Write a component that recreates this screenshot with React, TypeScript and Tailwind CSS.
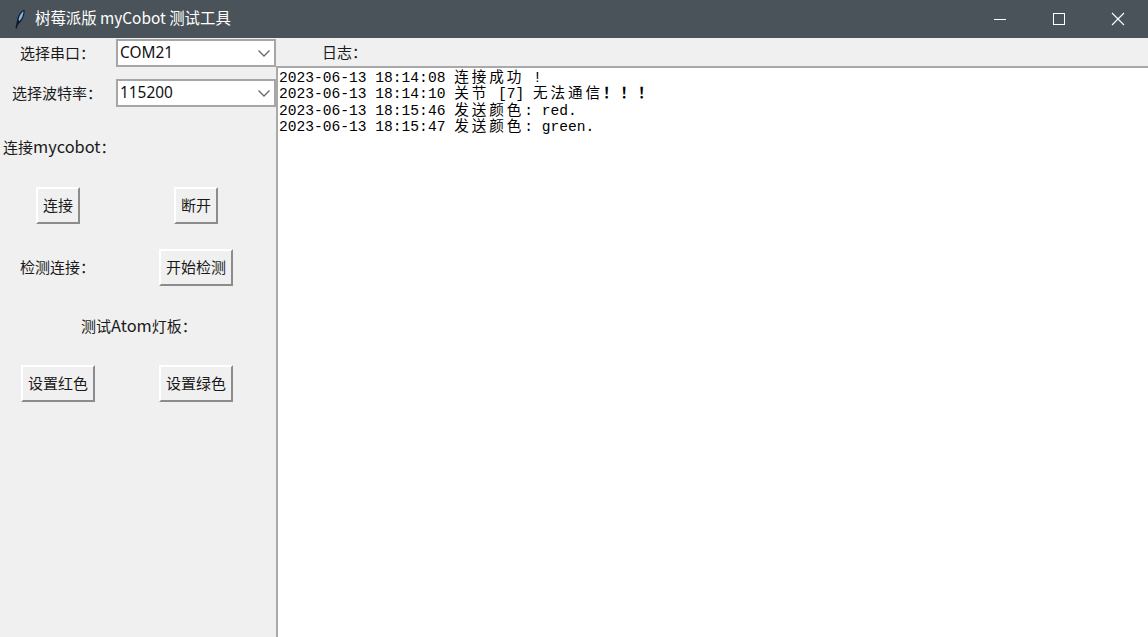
import React from 'react';

const cjk = '[font-family:"Noto_Sans_CJK_SC","Liberation_Sans",sans-serif]';

// Raised Tk-style button
const TkButton = ({ label, className }: { label: string; className: string }) => (
  <button
    className={`h-[37px] flex items-center justify-center pb-[2px] bg-[#f0f0f0] text-[15px] leading-none text-[#1a1a1a] border-t-2 border-l-2 border-b-2 border-r-2 border-t-white border-l-white border-b-[#8c8c8c] border-r-[#8c8c8c] ${className}`}
  >
    {label}
  </button>
);

const Combo = ({ value }: { value: string }) => (
  <div className="w-[160px] h-[28px] flex items-center justify-between bg-white border-2 border-[#a6a6a6] pl-[2px] pr-[3px]">
    <span className='font-["Noto_Sans"] text-[15.4px] leading-none pb-px text-[#111]'>{value}</span>
    <svg width="14" height="14" viewBox="0 0 14 14" fill="none" stroke="#6b6b6b" strokeWidth="1.4">
      <path d="M1.5 4.5 L7 10 L12.5 4.5" />
    </svg>
  </div>
);

// Chinese runs in the log sit on the double-width grid of the mono font
const Han = ({ children, bold }: { children: string; bold?: boolean }) => (
  <span className={`inline-block h-[16px] leading-[16px] font-["Noto_Sans_CJK_SC"] text-[14.6px] tracking-[2.9px] ${bold ? 'font-bold' : ''}`}>
    {children}
  </span>
);

const LogLine = ({ children }: { children: React.ReactNode }) => (
  <div className="h-[16.33px] leading-[16.33px] whitespace-pre">{children}</div>
);

export default function App() {
  return (
    <div className={`w-[1148px] h-[637px] flex flex-col overflow-hidden bg-[#f0f0f0] ${cjk}`}>
      {/* title bar */}
      <div className="h-[38px] shrink-0 flex items-center bg-[#4a5359] text-white">
        <svg className="ml-[14px]" width="12" height="22" viewBox="0 0 12 22">
          <path d="M1.5 20 C2 17 2.5 15 3 13 C3.5 8 6.5 3 10.5 1.5 C11 6 9 12 5.5 15 C4.5 16 4 17 3.5 18 L2.5 21 Z" fill="#0d1b2a" />
          <path d="M4.5 12 C5 8 7.5 4.5 9.5 3 C9.5 6.5 8 10.5 5.5 13 Z" fill="#7fb2e5" />
        </svg>
        <span className="ml-[9px] pb-[2px] text-[15.4px] leading-none whitespace-pre">树莓派版 myCobot 测试工具</span>
        <div className="ml-auto flex items-center h-full">
          <div className="w-[58px] h-full flex items-center justify-center">
            <div className="w-[12px] h-px bg-white" />
          </div>
          <div className="w-[59px] h-full flex items-center justify-center">
            <div className="w-[12px] h-[12px] border border-white" />
          </div>
          <div className="w-[60px] h-full flex items-center justify-center">
            <svg width="14" height="14" viewBox="0 0 14 14" stroke="#fff" strokeWidth="1.1">
              <path d="M1 1 L13 13 M13 1 L1 13" />
            </svg>
          </div>
        </div>
      </div>

      <div className="flex-1 flex min-h-0">
        {/* left panel */}
        <div className="w-[276px] shrink-0 flex flex-col text-[15px] leading-none text-[#1a1a1a]">
          <div className="flex items-center mt-px">
            <span className="w-[116px] pl-[20px] pb-[2px] whitespace-pre">选择串口：</span>
            <Combo value="COM21" />
          </div>
          <div className="flex items-center mt-[12px]">
            <span className="w-[116px] pl-[12px] pb-[2px] whitespace-pre">选择波特率：</span>
            <Combo value="115200" />
          </div>
          <div className="mt-[32px] pl-[3px] h-[14px] flex items-center whitespace-pre">
            连接<span className="text-[16.4px]">mycobot</span>：
          </div>
          <div className="mt-[34px] flex">
            <TkButton label="连接" className="w-[44px] ml-[36px]" />
            <TkButton label="断开" className="w-[44px] ml-[94px]" />
          </div>
          <div className="mt-[25px] flex items-center">
            <span className="w-[159px] pl-[20px] pb-[3px] whitespace-pre">检测连接：</span>
            <TkButton label="开始检测" className="w-[74px]" />
          </div>
          <div className="mt-[32px] pl-[81px] h-[14px] flex items-center whitespace-pre">
            测试<span className="text-[16.4px]">Atom</span>灯板：
          </div>
          <div className="mt-[33px] flex">
            <TkButton label="设置红色" className="w-[74px] ml-[21px]" />
            <TkButton label="设置绿色" className="w-[74px] ml-[64px]" />
          </div>
        </div>

        {/* log panel */}
        <div className="flex-1 min-w-0 flex flex-col">
          <div className="h-[28px] shrink-0 flex items-center pl-[46px] pb-[2px] text-[15px] leading-none text-[#1a1a1a] whitespace-pre">日志：</div>
          <div className='flex-1 bg-white border-t-2 border-l-2 border-[#a9a9a9] pl-px font-["Liberation_Mono"] text-[14.6px] text-black'>
            <LogLine>2023-06-13 18:14:08 <Han>连接成功</Han> !</LogLine>
            <LogLine>2023-06-13 18:14:10 <Han>关节</Han> [7] <Han>无法通信</Han><Han bold>！！！</Han></LogLine>
            <LogLine>2023-06-13 18:15:46 <Han>发送颜色</Han>: red.</LogLine>
            <LogLine>2023-06-13 18:15:47 <Han>发送颜色</Han>: green.</LogLine>
          </div>
        </div>
      </div>
    </div>
  );
}
